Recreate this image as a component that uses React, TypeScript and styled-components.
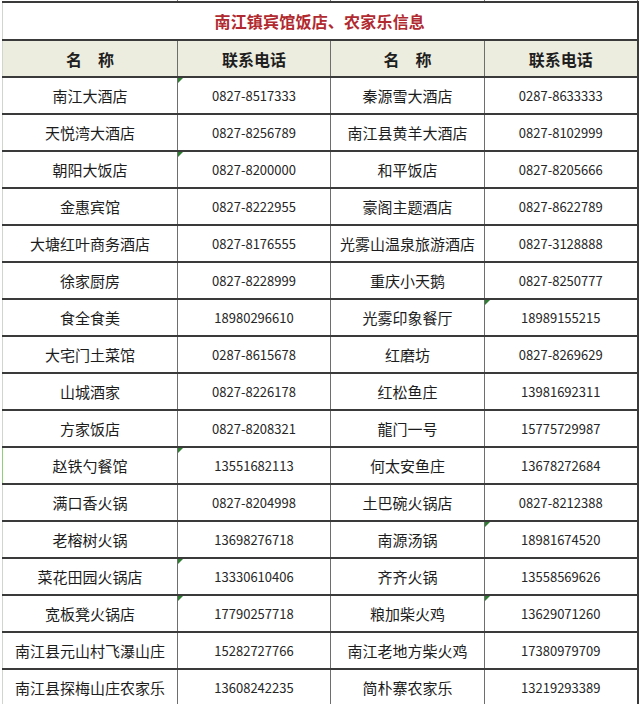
import React from 'react';
import styled, { createGlobalStyle } from 'styled-components';

const GlobalStyle = createGlobalStyle`
  html, body {
    margin: 0;
    padding: 0;
    background: #fff;
  }
  body {
    font-family: 'Noto Sans CJK SC', 'Noto Sans', sans-serif;
    color: #1c1c1c;
  }
`;

const Page = styled.div`
  width: 640px;
  height: 704px;
  overflow: hidden;
  padding-left: 2px;
  box-sizing: border-box;
`;

const Sheet = styled.table`
  border-collapse: collapse;
  table-layout: fixed;
  width: 635px;
`;

const StubRow = styled.tr`
  td {
    padding: 0;
    height: 1px;
    line-height: 0;
    font-size: 0;
    border-right: 1px solid #777;
  }
`;

const TitleCell = styled.td`
  height: 36px;
  padding: 0;
  border-top: 2px solid #3a3a3a;
  border-bottom: 2px solid #3a3a3a;
  border-left: 1px solid #cfd6cc;
  border-right: 2px solid #3a3a3a;
  text-align: center;
  vertical-align: middle;
  font-size: 16px;
  font-weight: 700;
  color: #b12a30;
  letter-spacing: 0.2px;
`;

const HeadCell = styled.th`
  height: 35px;
  padding: 0;
  background: #ededdf;
  border-bottom: 2px solid #3a3a3a;
  border-left: 1px solid #6e6e6e;
  border-right: 1px solid #6e6e6e;
  text-align: center;
  vertical-align: middle;
  font-size: 16px;
  font-weight: 700;
  color: #1e1e1e;

  &:first-child {
    border-left: 1px solid #cfd6cc;
  }
  &:last-child {
    border-right: 2px solid #3a3a3a;
  }
`;

const Cell = styled.td<{ $phone?: boolean; $mark?: boolean; $green?: boolean }>`
  position: relative;
  height: 35px;
  padding: 0;
  border-bottom: 2px solid #3a3a3a;
  border-left: 1px solid #6e6e6e;
  border-right: 1px solid #6e6e6e;
  text-align: center;
  vertical-align: middle;
  white-space: nowrap;
  font-size: ${(p) => (p.$phone ? '13px' : '15px')};
  color: ${(p) => (p.$phone ? '#262626' : '#1c1c1c')};
  font-weight: 400;

  &:first-child {
    border-left: 1px solid ${(p) => (p.$green ? '#8fcf7a' : '#cfd6cc')};
  }
  &:last-child {
    border-right: 2px solid #3a3a3a;
  }

  ${(p) =>
    p.$mark &&
    `
    &::before {
      content: '';
      position: absolute;
      left: 0;
      top: 0;
      border-top: 5px solid #2e7d32;
      border-right: 5px solid transparent;
    }
  `}
`;

type Row = [string, string, string, string, boolean?, boolean?];

const rows: Row[] = [
  ['南江大酒店', '0827-8517333', '秦源雪大酒店', '0287-8633333', true],
  ['天悦湾大酒店', '0827-8256789', '南江县黄羊大酒店', '0827-8102999'],
  ['朝阳大饭店', '0827-8200000', '和平饭店', '0827-8205666', true],
  ['金惠宾馆', '0827-8222955', '豪阁主题酒店', '0827-8622789'],
  ['大塘红叶商务酒店', '0827-8176555', '光雾山温泉旅游酒店', '0827-3128888'],
  ['徐家厨房', '0827-8228999', '重庆小天鹅', '0827-8250777'],
  ['食全食美', '18980296610', '光雾印象餐厅', '18989155215', false, true],
  ['大宅门土菜馆', '0287-8615678', '红磨坊', '0827-8269629'],
  ['山城酒家', '0827-8226178', '红松鱼庄', '13981692311'],
  ['方家饭店', '0827-8208321', '龍门一号', '15775729987'],
  ['赵铁勺餐馆', '13551682113', '何太安鱼庄', '13678272684', true],
  ['满口香火锅', '0827-8204998', '土巴碗火锅店', '0827-8212388'],
  ['老榕树火锅', '13698276718', '南源汤锅', '18981674520', false, true],
  ['菜花田园火锅店', '13330610406', '齐齐火锅', '13558569626', true],
  ['宽板凳火锅店', '17790257718', '粮加柴火鸡', '13629071260', true, true],
  ['南江县元山村飞瀑山庄', '15282727766', '南江老地方柴火鸡', '17380979709'],
  ['南江县探梅山庄农家乐', '13608242235', '简朴寨农家乐', '13219293389'],
];

export default function App() {
  return (
    <Page>
      <GlobalStyle />
      <Sheet>
        <colgroup>
          <col style={{ width: 175 }} />
          <col style={{ width: 153 }} />
          <col style={{ width: 154 }} />
          <col style={{ width: 153 }} />
        </colgroup>
        <tbody>
          <StubRow>
            <td />
            <td />
            <td />
            <td />
          </StubRow>
          <tr>
            <TitleCell colSpan={4}>南江镇宾馆饭店、农家乐信息</TitleCell>
          </tr>
          <tr>
            <HeadCell>名　称</HeadCell>
            <HeadCell>联系电话</HeadCell>
            <HeadCell>名　称</HeadCell>
            <HeadCell>联系电话</HeadCell>
          </tr>
          {rows.map(([n1, p1, n2, p2, m1, m2], i) => (
            <tr key={i}>
              <Cell $green={i === 10}>{n1}</Cell>
              <Cell $phone $mark={m1}>{p1}</Cell>
              <Cell>{n2}</Cell>
              <Cell $phone $mark={m2}>{p2}</Cell>
            </tr>
          ))}
        </tbody>
      </Sheet>
    </Page>
  );
}
